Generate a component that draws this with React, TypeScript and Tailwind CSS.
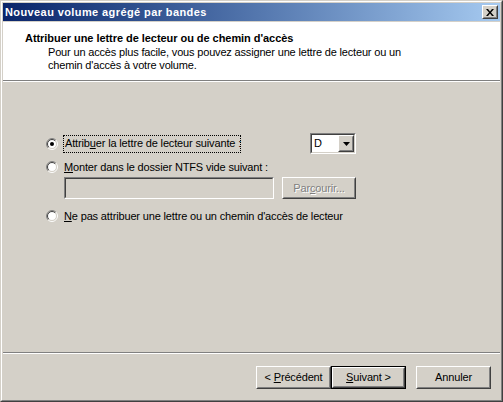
import React from "react";

const font = { fontFamily: '"Liberation Sans", Arial, sans-serif' };

function Radio({ checked }: { checked?: boolean }) {
  return (
    <svg width="12" height="12" viewBox="0 0 12 12" className="shrink-0">
      <circle cx="6" cy="6" r="4.5" fill="#ffffff" />
      <path d="M2.111 9.889 A5.5 5.5 0 0 1 9.889 2.111" stroke="#808080" fill="none" strokeWidth="1" />
      <path d="M9.889 2.111 A5.5 5.5 0 0 1 2.111 9.889" stroke="#ffffff" fill="none" strokeWidth="1" />
      <path d="M2.818 9.182 A4.5 4.5 0 0 1 9.182 2.818" stroke="#404040" fill="none" strokeWidth="1" />
      <path d="M9.182 2.818 A4.5 4.5 0 0 1 2.818 9.182" stroke="#d4d0c8" fill="none" strokeWidth="1" />
      {checked && <circle cx="6" cy="6" r="2" fill="#000000" />}
    </svg>
  );
}

function Raised({ children, className = "" }: { children: React.ReactNode; className?: string }) {
  return (
    <div className={"border border-t-white border-l-white border-b-[#404040] border-r-[#404040] " + className}>
      <div className="w-full h-full border border-t-[#d4d0c8] border-l-[#d4d0c8] border-b-[#808080] border-r-[#808080] bg-[#d4d0c8] flex items-center justify-center">
        {children}
      </div>
    </div>
  );
}

function Sunken({ children, className = "", inner = "bg-white" }: { children?: React.ReactNode; className?: string; inner?: string }) {
  return (
    <div className={"border border-t-[#808080] border-l-[#808080] border-b-white border-r-white " + className}>
      <div className={"w-full h-full border border-t-[#404040] border-l-[#404040] border-b-[#d4d0c8] border-r-[#d4d0c8] flex " + inner}>
        {children}
      </div>
    </div>
  );
}

function Btn({ children, def }: { children: React.ReactNode; def?: boolean }) {
  if (def) {
    return (
      <div className="w-[75px] h-[23px] border border-black">
        <Raised className="w-full h-full">{children}</Raised>
      </div>
    );
  }
  return <Raised className="w-[75px] h-[23px]">{children}</Raised>;
}

export default function App() {
  return (
    <div className="w-[503px] h-[402px] bg-[#d4d0c8] text-[11px] leading-[13px] tracking-[-0.15px] text-black whitespace-nowrap" style={font}>
      <div className="w-full h-full border border-t-[#d4d0c8] border-l-[#d4d0c8] border-b-[#404040] border-r-[#404040]">
        <div className="w-full h-full border border-t-white border-l-white border-b-[#808080] border-r-[#808080] p-px flex flex-col">
          {/* Title bar */}
          <div className="h-[18px] shrink-0 flex items-center justify-between pl-[2px] pr-[2px] bg-gradient-to-r from-[#0a246a] to-[#a6caf0]">
            <span className="text-white font-bold text-[11px] tracking-[0.4px]">Nouveau volume agrégé par bandes</span>
            <Raised className="w-[16px] h-[14px]">
              <svg width="8" height="7" viewBox="0 0 8 7">
                <path d="M0 0h2l2 2.5L6 0h2L5 3.5 8 7H6L4 4.5 2 7H0l3-3.5z" fill="#000" />
              </svg>
            </Raised>
          </div>
          <div className="h-px shrink-0" />
          {/* Client */}
          <div className="flex-1 flex flex-col">
            {/* Header */}
            <div className="h-[58px] shrink-0 bg-white pt-[10px] pl-[22px]">
              <div className="font-bold tracking-[-0.05px]">Attribuer une lettre de lecteur ou de chemin d'accès</div>
              <div className="pl-[23px] mt-px tracking-[-0.17px]">
                <div>Pour un accès plus facile, vous pouvez assigner une lettre de lecteur ou un</div>
                <div>chemin d'accès à votre volume.</div>
              </div>
            </div>
            <div className="h-px bg-[#808080] shrink-0" />
            <div className="h-px bg-white shrink-0" />
            {/* Body */}
            <div className="h-[270px] shrink-0 pl-[43px] pt-[51px]">
              <div className="flex items-center h-[21px]">
                <Radio checked />
                <div className="ml-[5px] border border-dotted border-black px-px h-[18px] flex items-center w-[178px]">
                  <span>Attrib<u>u</u>er la lettre de lecteur suivante :</span>
                </div>
                <Sunken className="ml-[69px] w-[46px] h-[21px]">
                  <div className="flex-1 pl-[2px] flex items-center">D</div>
                  <Raised className="w-[16px] h-full">
                    <svg width="7" height="4" viewBox="0 0 7 4">
                      <path d="M0 0h7L3.5 4z" fill="#000" />
                    </svg>
                  </Raised>
                </Sunken>
              </div>
              <div className="flex items-center h-[14px] mt-[6px]">
                <Radio />
                <span className="ml-[6px]"><u>M</u>onter dans le dossier NTFS vide suivant :</span>
              </div>
              <div className="flex ml-[18px] mt-[3px] gap-[8px]">
                <Sunken className="w-[210px] h-[22px]" inner="bg-[#d4d0c8]" />
                <Raised className="w-[74px] h-[22px]">
                  <span className="text-[#808080] [text-shadow:1px_1px_0_#ffffff]">Par<u>c</u>ourir...</span>
                </Raised>
              </div>
              <div className="flex items-center h-[14px] mt-[10px]">
                <Radio />
                <span className="ml-[6px]"><u>N</u>e pas attribuer une lettre ou un chemin d'accès de lecteur</span>
              </div>
            </div>
            <div className="h-px bg-[#808080] shrink-0" />
            <div className="h-px bg-white shrink-0" />
            {/* Footer */}
            <div className="flex-1 flex justify-end items-start pt-[12px] pr-[9px]">
              <Btn>
                <span>&lt; <u>P</u>récédent</span>
              </Btn>
              <Btn def>
                <span><u>S</u>uivant &gt;</span>
              </Btn>
              <div className="w-[10px]" />
              <Btn>
                <span>Annuler</span>
              </Btn>
            </div>
          </div>
        </div>
      </div>
    </div>
  );
}
